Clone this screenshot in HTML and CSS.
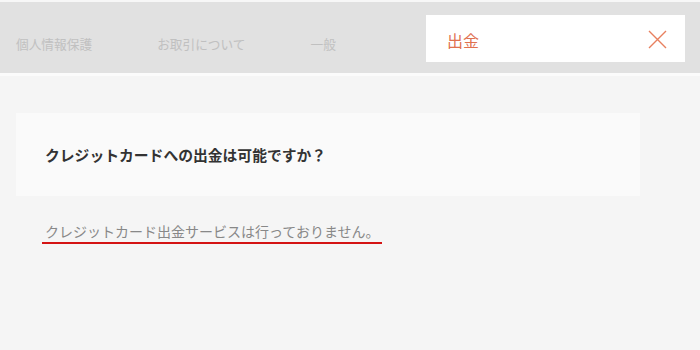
FILE: index.html
```html
<!DOCTYPE html>
<html lang="ja">
<head>
    <meta charset="UTF-8">
    <meta name="viewport" content="width=device-width, initial-scale=1.0">
    <title>FAQ</title>
    <link rel="stylesheet" href="styles.css">
</head>
<body>

    <header class="head">
        <ul class="tabs">
            <li>個人情報保護</li>
            <li>お取引について</li>
            <li>一般</li>
        </ul>
        <div class="search">
            <span class="word">出金</span>
            <svg class="close" width="19" height="19" viewBox="0 0 19 19">
                <path d="M1 1 L18 18 M18 1 L1 18" stroke="#e8805f" stroke-width="1.4" fill="none"/>
            </svg>
        </div>
    </header>

    <div class="faq">
        <div class="question">クレジットカードへの出金は可能ですか？</div>
        <p class="answer"><span>クレジットカード出金サービスは行っておりません。</span></p>
    </div>

</body>
</html>
```

FILE: styles.css
```css
*{
    margin: 0px;
    padding: 0px;
    box-sizing: border-box;
}
body{
    background: #f5f5f5;
    font-family: "Noto Sans CJK JP", "Noto Sans", sans-serif;
}
.head{
    height: 76px;
    display: flex;
    align-items: flex-start;
    background: #e1e1e1;
    border-top: 2px solid #f7f7f7;
    border-bottom: 3px solid #fbfbfb;
}
.tabs{
    display: flex;
    gap: 65px;
    padding-left: 16px;
    padding-top: 34px;
    list-style: none;
}
.tabs li{
    font-size: 12.7px;
    line-height: 16px;
    color: #c0c0c0;
}
.search{
    margin-left: auto;
    margin-right: 15px;
    margin-top: 13px;
    width: 259px;
    height: 47px;
    background: #ffffff;
    display: flex;
    align-items: center;
    padding: 2px 18px 0 21px;
}
.word{
    font-size: 16px;
    color: #e0714f;
}
.close{
    margin-left: auto;
}
.faq{
    padding: 37px 0 0 16px;
}
.question{
    width: 624px;
    height: 83px;
    background: #fafafa;
    display: flex;
    align-items: center;
    padding-left: 29px;
    padding-bottom: 1px;
    font-size: 14.8px;
    font-weight: bold;
    color: #333333;
}
.answer{
    margin-top: 25px;
    padding-left: 26px;
    font-size: 14px;
    line-height: 20px;
}
.answer span{
    display: inline-block;
    padding: 0 3px 1px 3px;
    color: #888888;
    border-bottom: 2px solid #d41414;
}
```
